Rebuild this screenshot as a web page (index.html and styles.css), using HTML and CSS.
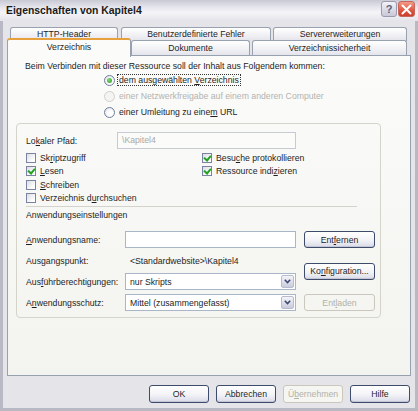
FILE: index.html
```html
<!DOCTYPE html>
<html>
<head>
<meta charset="utf-8">
<link rel="stylesheet" href="styles.css">
</head>
<body>
<div class="window">
  <div class="titlebar">
    <span class="title">Eigenschaften von Kapitel4</span>
    <div class="tb-buttons">
      <span class="tb-help">?</span>
      <span class="tb-close"><svg width="11" height="11" viewBox="0 0 11 11"><path d="M1.5 1.5 L9.5 9.5 M9.5 1.5 L1.5 9.5" stroke="#fff" stroke-width="2" stroke-linecap="round"/></svg></span>
    </div>
  </div>
  <div class="client">
    <div class="tabs">
      <div class="tabrow back">
        <div class="tab t-http">HTTP-Header</div>
        <div class="tab t-fehler">Benutzerdefinierte Fehler</div>
        <div class="tab t-server">Servererweiterungen</div>
      </div>
      <div class="tabrow front">
        <div class="tab selected t-verz">Verzeichnis</div>
        <div class="tab t-dok">Dokumente</div>
        <div class="tab t-sich">Verzeichnissicherheit</div>
      </div>
    </div>
    <div class="panel">
      <div class="intro">Beim Verbinden mit dieser Ressource soll der Inhalt aus Folgendem kommen:</div>
      <div class="radios">
        <div class="radio-row"><span class="radio on"></span><span class="focus">dem ausgewählten <u>V</u>erzeichnis</span></div>
        <div class="radio-row disabled"><span class="radio off-dis"></span><span>einer Netzwerkfreigabe auf einem anderen Computer</span></div>
        <div class="radio-row"><span class="radio"></span><span>einer Umleitung zu eine<u>m</u> URL</span></div>
      </div>
      <div class="group">
        <div class="path-row">
          <span class="path-label">Lo<u>k</u>aler Pfad:</span>
          <div class="input disabled-input">\Kapitel4</div>
        </div>
        <div class="checks">
          <div class="check-row"><span class="cb"></span><span>Sk<u>r</u>iptzugriff</span></div>
          <div class="check-row"><span class="cb checked"></span><span>Besu<u>c</u>he protokollieren</span></div>
          <div class="check-row"><span class="cb checked"></span><span><u>L</u>esen</span></div>
          <div class="check-row"><span class="cb checked"></span><span>Ressource indi<u>z</u>ieren</span></div>
          <div class="check-row"><span class="cb"></span><span><u>S</u>chreiben</span></div>
          <div class="check-row empty"></div>
          <div class="check-row"><span class="cb"></span><span>Verzeichnis d<u>u</u>rchsuchen</span></div>
        </div>
        <div class="separator"></div>
        <div class="section">Anwendungseinstellungen</div>
        <div class="app-grid">
          <span class="lbl r1"><u>A</u>nwendungsname:</span>
          <div class="input r1"></div>
          <button class="btn r1 c3">Ent<u>f</u>ernen</button>
          <span class="lbl r2">Ausgangspunkt:</span>
          <span class="value r2">&lt;Standardwebsite&gt;\Kapitel4</span>
          <button class="btn r23 c3">Ko<u>n</u>figuration...</button>
          <span class="lbl r3">Aus<u>f</u>ührberechtigungen:</span>
          <div class="select r3"><span>nur Skripts</span><span class="drop"><svg width="7" height="5" viewBox="0 0 7 5"><path d="M0.8 0.8 L3.5 3.6 L6.2 0.8" fill="none" stroke="#3b4a6e" stroke-width="1.6"/></svg></span></div>
          <span class="lbl r4">A<u>n</u>wendungsschutz:</span>
          <div class="select r4"><span>Mittel (zusammengefasst)</span><span class="drop"><svg width="7" height="5" viewBox="0 0 7 5"><path d="M0.8 0.8 L3.5 3.6 L6.2 0.8" fill="none" stroke="#3b4a6e" stroke-width="1.6"/></svg></span></div>
          <button class="btn r4 c3" disabled>Ent<u>l</u>aden</button>
        </div>
      </div>
    </div>
    <div class="footer">
      <button class="btn fbtn">OK</button>
      <button class="btn fbtn">Abbrechen</button>
      <button class="btn fbtn" disabled>Ü<u>b</u>ernehmen</button>
      <button class="btn fbtn">Hilfe</button>
    </div>
  </div>
</div>
</body>
</html>
```

FILE: styles.css
```css
* { box-sizing: border-box; }
html, body { margin: 0; padding: 0; background: #ffffff; }
body { font-family: "Liberation Sans", Arial, sans-serif; font-size: 8.7px; color: #1e1e1e; }
u { text-decoration: underline; text-underline-offset: 1px; }

.window {
  width: 418px; height: 411px;
  background: #b9b9c6;
  display: flex; flex-direction: column;
  padding: 0 3px 3px 3px;
}
.titlebar {
  height: 21px; margin: 0 -3px;
  background: linear-gradient(#c9c9d4 0%, #e6e6ee 35%, #f5f5f8 60%, #e3e3ea 100%);
  display: flex; align-items: center; justify-content: space-between;
  padding: 0 3px 1px 6px;
}
.title { font-weight: bold; font-size: 10.4px; color: #1a1a1a; }
.tb-buttons { display: flex; gap: 1px; align-self: flex-start; margin-top: 1px; }
.tb-help {
  width: 16px; height: 16px; border-radius: 3px;
  border: 1px solid #9a9aae;
  background: linear-gradient(#f2f2f7, #c8c8d8);
  color: #5a6280; font-weight: bold; font-size: 11px;
  display: flex; align-items: center; justify-content: center;
}
.tb-close {
  width: 17px; height: 16px; border-radius: 3px;
  border: 1px solid #c7665a;
  background: linear-gradient(#f19a88, #e0553f 60%, #cd3e2c);
  display: flex; align-items: center; justify-content: center;
}

.client { flex: 1; background: #e5e5e9; display: flex; flex-direction: column; }

.tabs { padding-top: 6px; height: 34px; }
.tabrow { display: flex; }
.tabrow.back { margin-left: 7px; gap: 3px; height: 13px; }
.tabrow.front { margin-left: 4px; margin-top: -2px; height: 17px; align-items: flex-start; }
.tab {
  border: 1px solid #98a1b0; border-bottom: none;
  border-radius: 3px 3px 0 0;
  background: linear-gradient(#ffffff, #f2f2f6 50%, #e2e2ea);
  text-align: center; color: #1e1e1e;
  line-height: 13px;
}
.back .tab { height: 14px; }
.t-http { width: 108px; }
.t-fehler { width: 150px; margin-right: -1px; }
.t-server { width: 134px; }
.front .tab { height: 16px; margin-top: 2px; line-height: 14px; }
.front .tab.selected {
  position: relative; z-index: 2;
  height: 19px; margin-top: 0;
  border-top: 2px solid #e6a13c;
  background: #fbfbfa; line-height: 15px;
  width: 124px;
}
.t-dok { width: 119px; }
.t-sich { width: 155px; margin-left: 2px; }

.panel {
  margin-left: 4px; width: 404px; height: 321px;
  border: 1px solid #98a1b0;
  background: linear-gradient(#fbfbfa, #f3f3ef);
  padding: 5px 0 0 8px;
  position: relative; z-index: 1;
}
.intro { line-height: 11px; padding-left: 9px; }
.radios { padding-left: 88px; margin-top: 0; }
.radio-row { height: 16px; display: flex; align-items: center; gap: 4px; }
.radio-row.disabled { color: #b3b3b0; }
.radio {
  width: 11px; height: 11px; border-radius: 50%;
  border: 1px solid #6f7d9a;
  background: radial-gradient(circle at 60% 60%, #ffffff 30%, #dcdce4 100%);
  display: inline-flex; align-items: center; justify-content: center;
  flex: none;
}
.radio.on::after {
  content: ""; width: 5px; height: 5px; border-radius: 50%;
  background: radial-gradient(circle at 40% 35%, #7fdc70, #2a9b27);
}
.radio.off-dis { border-color: #d0d0cc; background: #f4f4f2; }
.focus { outline: 1px dotted #333; outline-offset: 0; padding: 0 1px; margin-left: -1px; }

.group {
  margin-top: 3px; width: 365px; height: 195px;
  border: 1px solid #d4d4ca; border-radius: 4px;
  padding: 8px 0 0 9px;
}
.path-row { display: flex; align-items: center; height: 17px; }
.path-label { width: 91px; }
.input {
  height: 17px; background: #fff; border: 1px solid #a9b6c8;
  padding: 0 4px; line-height: 15px;
}
.path-row .input { width: 179px; }
.disabled-input { background: #fbfbf9; color: #aaaaa6; border-color: #c6cbd3; }

.checks {
  margin-top: 2px;
  display: grid; grid-template-columns: 176px auto; grid-auto-rows: 13.5px;
}
.check-row { display: flex; align-items: center; gap: 4px; }
.cb {
  width: 10px; height: 10px; border: 1px solid #7a84a0;
  background: linear-gradient(135deg, #dcdce4, #ffffff 80%);
  flex: none; position: relative;
}
.cb.checked::after {
  content: ""; position: absolute; left: 2px; top: 0px;
  width: 3px; height: 5px;
  border: solid #21a121; border-width: 0 2px 2px 0;
  transform: rotate(40deg);
}
.separator { margin-top: 1px; width: 331px; height: 1px; background: #d3d3cc; }
.section { margin-top: 3px; line-height: 11px; }

.app-grid {
  margin-top: 10px;
  display: grid;
  grid-template-columns: 99px 171px 71px;
  grid-template-rows: 17px 17px 17px 17px;
  column-gap: 0; row-gap: 4px;
  align-items: center;
}
.app-grid .lbl { grid-column: 1; }
.r1 { grid-row: 1; }
.r2 { grid-row: 2; }
.r3 { grid-row: 3; }
.r4 { grid-row: 4; }
.r23 { grid-row: 2 / span 2; }
.app-grid .input, .app-grid .select, .app-grid .value { grid-column: 2; }
.app-grid .value { padding-left: 5px; }
.app-grid .c3 { grid-column: 3; margin-left: 8px; width: 71px; }
.select {
  height: 17px; background: #fff; border: 1px solid #a9b6c8;
  display: flex; align-items: center; justify-content: space-between;
  padding: 0 1px 0 4px;
}
.drop {
  width: 13px; height: 13px; border-radius: 2px;
  background: linear-gradient(#f4f4f9, #c9cbdc);
  border: 1px solid #b6bccd;
  display: flex; align-items: center; justify-content: center;
}

.btn {
  font-family: "Liberation Sans", Arial, sans-serif; font-size: 8.7px; color: #1e1e1e;
  height: 17px; padding: 0;
  border: 1px solid #3e4c6c; border-radius: 3px;
  background: linear-gradient(#ffffff, #f3f3f7 55%, #d9dae6);
  box-shadow: inset 0 -1px 0 #c4c6d8;
}
.btn:disabled {
  color: #b3b2a8; border-color: #cac8bc;
  background: #f5f5f1; box-shadow: none;
}
.footer {
  margin-top: 9px;
  display: flex; justify-content: flex-end; gap: 7px;
  padding-right: 5px;
}
.fbtn { width: 60px; height: 18px; }
```
